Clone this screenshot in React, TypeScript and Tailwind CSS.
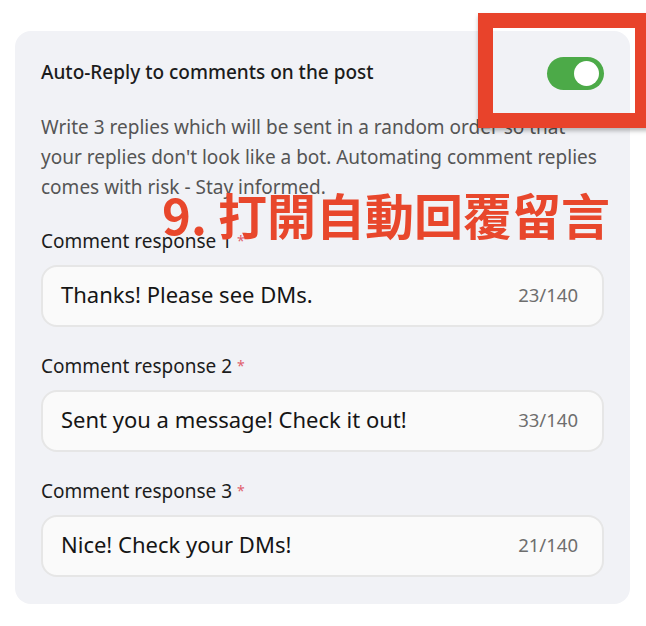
const fields = [
  { label: "Comment response 1", value: "Thanks! Please see DMs." },
  { label: "Comment response 2", value: "Sent you a message! Check it out!" },
  { label: "Comment response 3", value: "Nice! Check your DMs!" },
]

function Toggle() {
  return (
    <div className="flex h-[33px] w-[57px] items-center justify-end rounded-full bg-[#4caa48] px-[5px]">
      <div className="h-[25px] w-[25px] rounded-full bg-white" />
    </div>
  )
}

function Field({ label, value }: { label: string; value: string }) {
  return (
    <div className="flex flex-col gap-3">
      <div className="text-[19px] leading-6 text-[#1c1c1c]">
        {label} <span className="align-top text-[14px] text-[#e0606c]">*</span>
      </div>
      <div className="flex h-[62px] items-center justify-between rounded-2xl border-2 border-[#e6e6e6] bg-[#fafafa] pb-[3px] pl-[18px] pr-6">
        <span className="text-[22px] text-[#151515]">{value}</span>
        <span className="text-[18.5px] text-[#6e6e6e]">{value.length}/140</span>
      </div>
    </div>
  )
}

export default function App() {
  return (
    <div className="relative h-[626px] w-[646px] overflow-hidden bg-white pt-[31px] pl-[15px] font-['Noto_Sans',sans-serif]">
      <div className="flex w-[615px] flex-col rounded-2xl bg-[#f1f2f6] px-[26px] pt-[26px] pb-[27px]">
        <div className="flex h-[33px] items-center justify-between">
          <span className="-mt-[3px] text-[19px] font-medium text-[#1c1c1c]">Auto-Reply to comments on the post</span>
          <Toggle />
        </div>
        <p className="mt-[22px] text-[19px] leading-[30px] text-[#555555]">
          Write 3 replies which will be sent in a random order so that your replies don't look like a bot. Automating comment replies comes with risk - Stay informed.
        </p>
        <div className="mt-[27px] flex flex-col gap-[27px]">
          {fields.map((f) => (
            <Field key={f.label} label={f.label} value={f.value} />
          ))}
        </div>
      </div>

      {/* annotation overlay */}
      <div className="absolute left-[478px] top-[13px] h-[115px] w-[172px] border-[15px] border-[#e8432b] shadow-[0_3px_4px_rgba(0,0,0,0.25)]" />
      <div className="absolute left-[162px] top-[189px] text-[49px] font-bold leading-none text-[#e8472c] font-['Noto_Sans_CJK_TC',sans-serif]">
        9. 打開自動回覆留言
      </div>
    </div>
  )
}
